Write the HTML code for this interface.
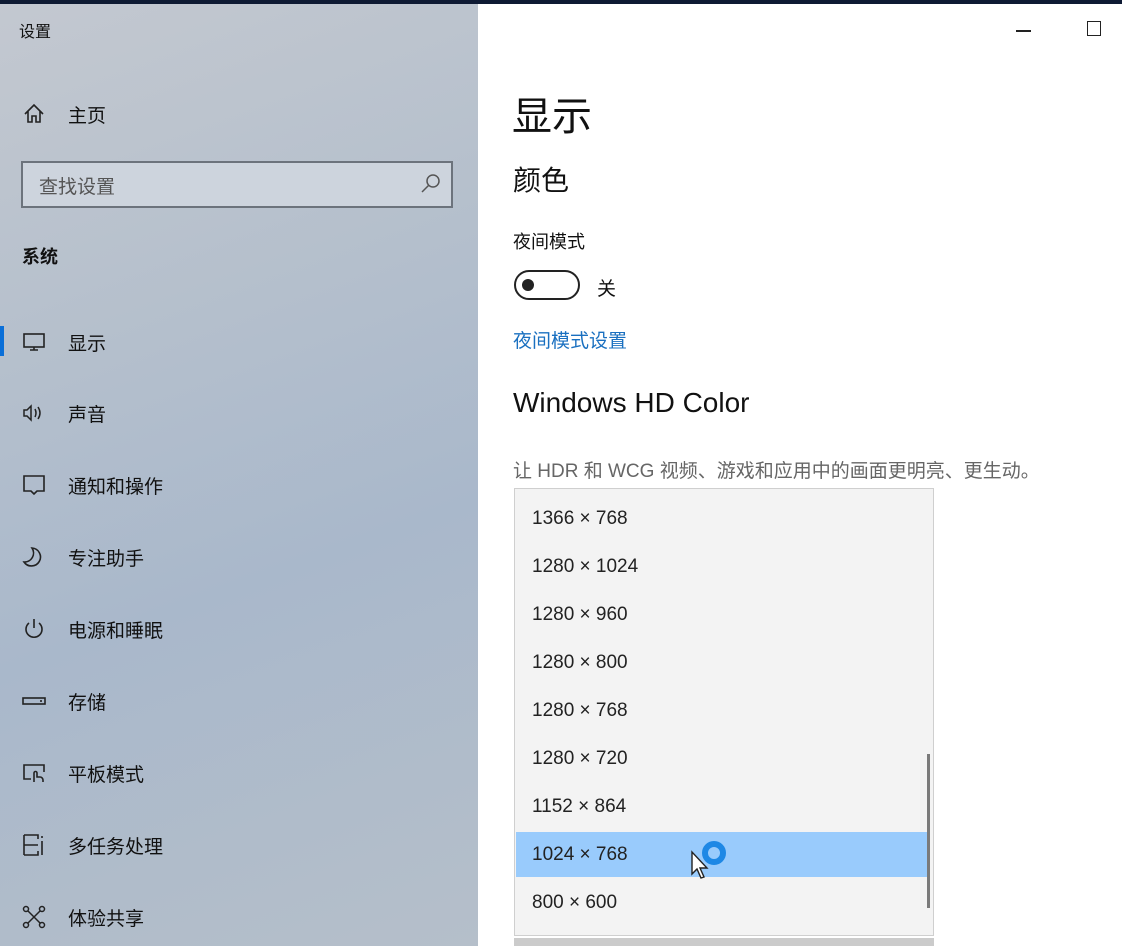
<!DOCTYPE html>
<html><head><meta charset="utf-8"><style>
*{margin:0;padding:0;box-sizing:border-box}
body{width:1122px;height:946px;overflow:hidden;position:relative;font-family:"Liberation Sans","Noto Sans CJK SC",sans-serif;background:#fff;color:#111}
.top{position:absolute;left:0;top:0;width:1122px;height:4px;background:#0e1a33}
.side{position:absolute;left:0;top:4px;width:478px;height:942px;background:linear-gradient(160deg,#c3c8d0 0%,#b4bfcc 35%,#a9b8cb 60%,#b5bfca 100%)}
.abs{position:absolute}
.nav{position:absolute;left:0;width:478px;height:30px;font-size:19px;display:flex;align-items:center}
.nav svg{position:absolute;left:21px;width:26px;height:26px}
.nav span{position:absolute;left:68px}
.item{position:absolute;left:532px;font-size:19px;color:#222}
</style></head><body>
<div class="top"></div>
<div class="side"></div>
<div class="abs" style="left:19px;top:18px;font-size:16px">设置</div>
<div class="nav" style="top:99px"><svg viewBox="0 0 26 26" fill="none" stroke="#222" stroke-width="1.6"><path d="M4 13 L13 4 L22 13 M7 10 V21 H11 V15 H15 V21 H19 V10"/></svg><span>主页</span></div>
<div class="abs" style="left:21px;top:161px;width:432px;height:47px;border:2px solid #6c737c;background:#cdd4dd"></div>
<div class="abs" style="left:39px;top:172px;font-size:19px;color:#555">查找设置</div>
<svg class="abs" style="left:420px;top:172px" width="22" height="22" viewBox="0 0 22 22" fill="none" stroke="#555" stroke-width="1.5"><circle cx="13" cy="9" r="6"/><path d="M9 13 L2 20"/></svg>
<div class="abs" style="left:22px;top:243px;font-size:18px;font-weight:bold">系统</div>
<div class="abs" style="left:0;top:326px;width:4px;height:30px;background:#0a6fd8"></div>
<div class="nav" style="top:327px"><svg viewBox="0 0 26 26" fill="none" stroke="#222" stroke-width="1.6"><rect x="3" y="5" width="20" height="13"/><path d="M13 18v3M9 21h8"/></svg><span>显示</span></div>
<div class="nav" style="top:398px"><svg viewBox="0 0 26 26" fill="none" stroke="#222" stroke-width="1.5"><path d="M3 10h3l4-4v14l-4-4H3z"/><path d="M14 9q2 4 0 8M17 7q4 6 0 12"/></svg><span>声音</span></div>
<div class="nav" style="top:470px"><svg viewBox="0 0 26 26" fill="none" stroke="#222" stroke-width="1.6"><path d="M3 4h20v15H16l-3 3-3-3H3z"/></svg><span>通知和操作</span></div>
<div class="nav" style="top:542px"><svg viewBox="0 0 26 26" fill="none" stroke="#222" stroke-width="1.6"><path d="M11 4a9 9 0 1 1-8 14a9 9 0 0 0 8-14z"/></svg><span>专注助手</span></div>
<div class="nav" style="top:614px"><svg viewBox="0 0 26 26" fill="none" stroke="#222" stroke-width="1.6"><path d="M13 3v9M8 7a8 8 0 1 0 10 0"/></svg><span>电源和睡眠</span></div>
<div class="nav" style="top:686px"><svg viewBox="0 0 26 26" fill="none" stroke="#222" stroke-width="1.6"><rect x="2" y="10" width="22" height="6"/><path d="M19 13h2"/></svg><span>存储</span></div>
<div class="nav" style="top:758px"><svg viewBox="0 0 26 26" fill="none" stroke="#222" stroke-width="1.6"><path d="M10 19H3V5h20v7M13 22v-9a1.5 1.5 0 0 1 3 0v4h3a3 3 0 0 1 3 3v2"/></svg><span>平板模式</span></div>
<div class="nav" style="top:830px"><svg viewBox="0 0 26 26" fill="none" stroke="#222" stroke-width="1.6"><path d="M3 3v20M3 3h14v4M3 23h14v-4M3 13h14M21 4v2M21 9v14"/></svg><span>多任务处理</span></div>
<div class="nav" style="top:902px"><svg viewBox="0 0 26 26" fill="none" stroke="#222" stroke-width="1.5"><circle cx="5" cy="5" r="2.5"/><circle cx="21" cy="5" r="2.5"/><circle cx="5" cy="21" r="2.5"/><circle cx="21" cy="21" r="2.5"/><path d="M7 7l12 12M19 7L7 19"/></svg><span>体验共享</span></div>

<div class="abs" style="left:1016px;top:30px;width:15px;height:1.5px;background:#222"></div>
<div class="abs" style="left:1087px;top:21px;width:14px;height:15px;border:1.5px solid #222"></div>
<div class="abs" style="left:512px;top:84px;font-size:40px">显示</div>
<div class="abs" style="left:513px;top:159px;font-size:28px">颜色</div>
<div class="abs" style="left:513px;top:228px;font-size:18px">夜间模式</div>
<div class="abs" style="left:514px;top:270px;width:66px;height:30px;border:2.5px solid #222;border-radius:15px"></div>
<div class="abs" style="left:522px;top:279px;width:12px;height:12px;border-radius:50%;background:#222"></div>
<div class="abs" style="left:597px;top:274px;font-size:19px">关</div>
<div class="abs" style="left:513px;top:326px;font-size:19px;color:#1a70c0">夜间模式设置</div>
<div class="abs" style="left:513px;top:387px;font-size:28px">Windows HD Color</div>
<div class="abs" style="left:513px;top:456px;font-size:19px;color:#666">让 HDR 和 WCG 视频、游戏和应用中的画面更明亮、更生动。</div>
<div class="abs" style="left:514px;top:488px;width:420px;height:448px;background:#f3f3f3;border:1px solid #cfcfcf"></div>
<div class="abs" style="left:516px;top:832px;width:414px;height:45px;background:#99cbfc"></div>
<div class="abs" style="left:927px;top:754px;width:3px;height:154px;background:#7a7a7a"></div>
<div class="abs" style="left:514px;top:938px;width:420px;height:8px;background:#cbcbcb"></div>
<div class="item" style="top:508px">1366 × 768</div>
<div class="item" style="top:556px">1280 × 1024</div>
<div class="item" style="top:604px">1280 × 960</div>
<div class="item" style="top:652px">1280 × 800</div>
<div class="item" style="top:700px">1280 × 768</div>
<div class="item" style="top:748px">1280 × 720</div>
<div class="item" style="top:796px">1152 × 864</div>
<div class="item" style="top:844px">1024 × 768</div>
<div class="item" style="top:892px">800 × 600</div>
<div class="abs" style="left:702px;top:841px;width:24px;height:24px;border-radius:50%;border:6px solid #1e88e5"></div>
<svg class="abs" style="left:690px;top:850px" width="20" height="30" viewBox="0 0 20 30"><path d="M2 2v22l5-5 4 9 3-1-4-9h7z" fill="#fff" stroke="#222" stroke-width="1.4"/></svg>
</body></html>
